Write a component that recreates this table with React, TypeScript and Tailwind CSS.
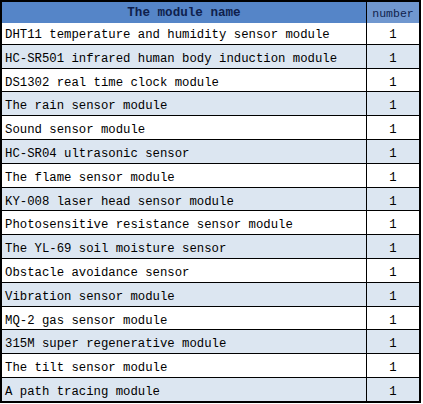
const modules = [
  'DHT11 temperature and humidity sensor module',
  'HC-SR501 infrared human body induction module',
  'DS1302 real time clock module',
  'The rain sensor module',
  'Sound sensor module',
  'HC-SR04 ultrasonic sensor',
  'The flame sensor module',
  'KY-008 laser head sensor module',
  'Photosensitive resistance sensor module',
  'The YL-69 soil moisture sensor',
  'Obstacle avoidance sensor',
  'Vibration sensor module',
  'MQ-2 gas sensor module',
  '315M super regenerative module',
  'The tilt sensor module',
  'A path tracing module',
];

export default function App() {
  return (
    <div className="w-[423px] h-[404px] bg-white">
      <div className="w-[421px] border-2 border-black font-['Liberation_Mono',monospace] text-[12.3px] text-black">
        {/* header */}
        <div className="grid grid-cols-[364px_1fr] h-[18px]">
          <div className="bg-[#5585c8] flex items-center justify-center pt-[2px] font-bold text-[12.6px] text-[#0f1f4d]">
            The module name
          </div>
          <div className="bg-[#7097cf] border-l border-black flex items-center justify-center pt-[2px] text-[11.5px] text-[#0f1f4d]">
            number
          </div>
        </div>

        {modules.map((name, i) => (
          <div
            key={name}
            className={`grid grid-cols-[364px_1fr] h-[23.8px] border-t border-black ${
              i % 2 === 1 ? 'bg-[#dce6f1]' : 'bg-white'
            }`}
          >
            <div className="flex items-center pl-[3px] pt-[5px] whitespace-nowrap">{name}</div>
            <div className="border-l border-black flex items-center justify-center pt-[5px]">1</div>
          </div>
        ))}
      </div>
    </div>
  );
}
